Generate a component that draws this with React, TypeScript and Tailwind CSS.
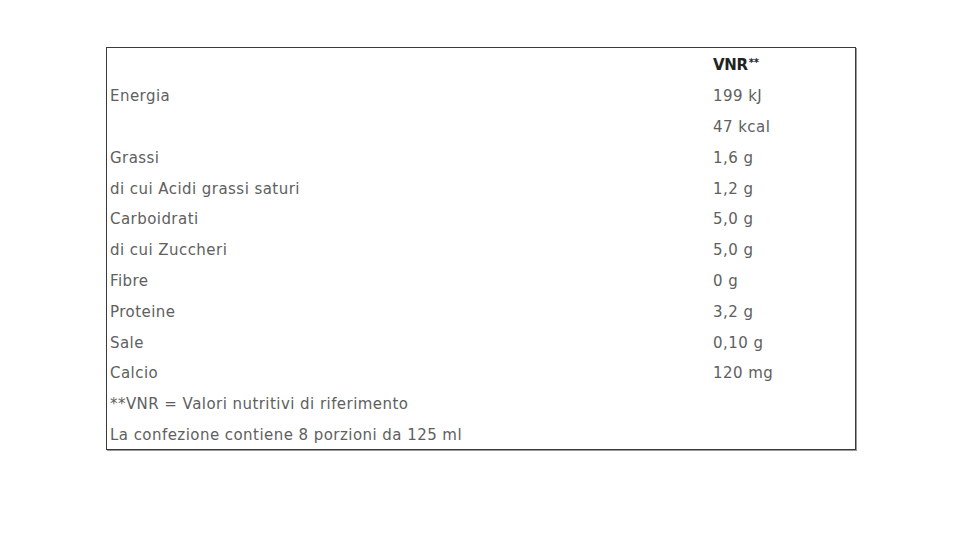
const ROWS: [string, string][] = [
  ['Energia', '199 kJ'],
  ['', '47 kcal'],
  ['Grassi', '1,6 g'],
  ['di cui Acidi grassi saturi', '1,2 g'],
  ['Carboidrati', '5,0 g'],
  ['di cui Zuccheri', '5,0 g'],
  ['Fibre', '0 g'],
  ['Proteine', '3,2 g'],
  ['Sale', '0,10 g'],
  ['Calcio', '120 mg'],
  ['**VNR = Valori nutritivi di riferimento', ''],
  ['La confezione contiene 8 porzioni da 125 ml', ''],
]

export default function App() {
  return (
    <div
      className="w-[960px] h-[540px] bg-white pt-[47px] pl-[106px]"
      style={{ fontFamily: '"DejaVu Sans", sans-serif' }}
    >
      <div className="w-[750px] border border-[#3a3a3a] shadow-[1px_1px_0_#9a9a9a] bg-white">
        <div className="flex h-[31px] pt-[4px] items-center">
          <div className="w-[606px]" />
          <div className="text-[15px] font-bold text-[#222] tracking-[-0.3px]">
            VNR<span className="text-[10px] align-top relative top-[1px] ml-[1px]">**</span>
          </div>
        </div>
        {ROWS.map(([label, value], i) => (
          <div
            key={i}
            className="flex h-[30.8px] pt-[4px] items-center text-[15px] tracking-[0.45px] text-[#606060]"
          >
            <div className="w-[606px] pl-[3px] whitespace-nowrap">{label}</div>
            <div className="whitespace-nowrap">{value}</div>
          </div>
        ))}
      </div>
    </div>
  )
}
